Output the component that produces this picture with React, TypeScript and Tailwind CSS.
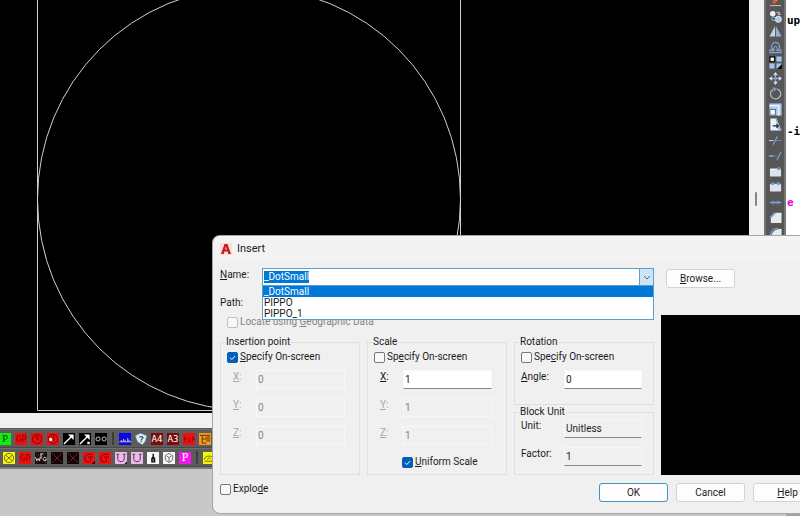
import type { ReactNode } from "react";

const UI = "font-[Roboto,'Liberation_Sans',sans-serif]";

/* ---------- toolbar icons ---------- */

type TileProps = { bg: string; children?: ReactNode };

function Tile({ bg, children }: TileProps) {
  return (
    <svg viewBox="0 0 13 13" className="block size-[12px]" aria-hidden="true">
      <rect width="13" height="13" fill={bg} />
      {children}
    </svg>
  );
}

type LetterProps = { bg: string; fg: string; text: string; serif?: boolean; size?: number };

function LetterTile({ bg, fg, text, serif, size = 9 }: LetterProps) {
  return (
    <Tile bg={bg}>
      <text
        x="6.5"
        y="10.2"
        textAnchor="middle"
        fontSize={size}
        fill={fg}
        fontFamily={serif ? "Liberation Serif, serif" : "DejaVu Sans Mono, monospace"}
      >
        {text}
      </text>
    </Tile>
  );
}

const RedClock = ({ dot }: { dot?: boolean }) => (
  <Tile bg="#f40d0d">
    <circle cx="6.5" cy="6.5" r="5" fill="none" stroke="#7c0505" />
    <path d="M3.5 2.5 7.5 8V2" fill="none" stroke="#7c0505" />
    {dot && <circle cx="4" cy="7" r="1.8" fill="#fff" />}
  </Tile>
);

const Arrow = ({ dot }: { dot?: boolean }) => (
  <Tile bg="#000">
    <path d="M1 12 9.5 3.5" stroke="#fff" strokeWidth="1.5" />
    <path d="M5.5 1.5H11.5V7.5Z" fill="#fff" />
    {dot && <rect x="9" y="9.5" width="2.6" height="2.6" fill="#fff" />}
  </Tile>
);

const Rings = () => (
  <Tile bg="#000">
    <circle cx="3.3" cy="6.5" r="2.2" fill="none" stroke="#ccc" />
    <circle cx="9.9" cy="6.5" r="2.2" fill="none" stroke="#ccc" />
  </Tile>
);

const Skyline = () => (
  <Tile bg="#0808f0">
    <path d="M0.5 9.5H13M2.5 9V7.5M5 9V6.5M6.5 9V7.5M9.5 9V5.5M11 9V7.5" stroke="#e5dc90" />
  </Tile>
);

const HelpShield = () => (
  <svg viewBox="0 0 13 13" className="block size-[12px]" aria-hidden="true">
    <path d="M0.5 3 6 0.5 12.5 3 11 9 8 12.5 3 9.5Z" fill="#e4f1f8" stroke="#8fb4ce" strokeWidth="0.6" />
    <text x="6.8" y="9.5" textAnchor="middle" fontSize="9" fontWeight="bold" fill="#21415f" fontFamily="Liberation Sans, sans-serif">
      ?
    </text>
  </svg>
);

const Circuit = () => (
  <Tile bg="#f79a1e">
    <path d="M1 2.5H12M3.5 2.5V11H8M3.500 6.5H12M7 4.500H12M8 8.500H12" fill="none" stroke="#5a3204" strokeWidth="1" />
  </Tile>
);

const YellowCross = () => (
  <Tile bg="#f5f50c">
    <circle cx="6.5" cy="6.5" r="5" fill="none" stroke="#6b6b14" />
    <path d="M3 3.500 10 9.500M10 3.500 3 9.500" stroke="#6b6b14" />
  </Tile>
);

const Wig = () => (
  <Tile bg="#111">
    <path d="M1 1 12 12M12 1 1 12" stroke="#b01818" strokeWidth="0.7" />
    <path d="M0.5 5.500 2 9.500 3.500 7 5 9.500 5.500 6M6.500 1V7M12.500 6.500C10 5 8.500 6.500 9 8.500 10 10.500 12.500 9.500 12.500 8H11M9 1 6.500 3.500" fill="none" stroke="#e8e8e8" strokeWidth="1" />
  </Tile>
);

const RedX = () => (
  <Tile bg="#080808">
    <path d="M1 1 12 12M12 1 1 12" stroke="#a81414" strokeWidth="1" />
  </Tile>
);

const RedC = ({ dot }: { dot?: boolean }) => (
  <Tile bg="#f21010">
    <path d="M10 2.500H4.500L2 5V8.500L4.500 11H6.500" fill="none" stroke="#5c0505" />
    <path d="M5.500 5.500H10.500M8 5.500V10.500" stroke="#5c0505" />
    {dot && <path d="M13 9.500V13H9.500Z" fill="#300" />}
  </Tile>
);

const Magnet = ({ dot }: { dot?: boolean }) => (
  <Tile bg="#efb8ea">
    <path d="M1.500 2.500H4.500M8.500 2.500H11.500M3 2.500V7.500C3 11.500 10 11.500 10 7.500V2.500" fill="none" stroke="#4c3450" />
    {dot && <path d="M13 10V13H10Z" fill="#222" />}
  </Tile>
);

const Bottle = () => (
  <Tile bg="#f8f8f8">
    <path d="M6 2H7.500V5L9 7V11.500H4.500V7L6 5Z" fill="#111" />
    <path d="M6.700 7.500V10" stroke="#ddd" strokeWidth="0.8" />
  </Tile>
);

const Cube = () => (
  <Tile bg="#f8f8f8">
    <path d="M6.500 1.500 10.500 4V8.500L6.500 11.500 2.500 8.500V4ZM4 4.500 6.500 6 9 4.500M6.500 6V11" fill="none" stroke="#555" strokeWidth="0.9" />
  </Tile>
);

const YellowArc = () => (
  <Tile bg="#f5f50c">
    <path d="M1.500 8.500C1.500 3 11.500 3 11.500 8.500M2 10H11M4.500 8 6.500 6 8.500 8" fill="none" stroke="#6b6b14" />
  </Tile>
);

/* ---------- modify palette icons ---------- */

const Glyph = ({ children }: { children: ReactNode }) => (
  <svg viewBox="0 0 14 14" className="block size-[13px]" aria-hidden="true">
    {children}
  </svg>
);

const modifyIcons: { name: string; icon: ReactNode }[] = [
  { name: "Erase", icon: <Glyph><path d="M5 9 12 1" stroke="#f5a43a" strokeWidth="3" /><path d="M3.500 9 6 6 8.500 8 6 11Z" fill="#e4502c" /><path d="M1 12.500H13" stroke="#ccc" /></Glyph> },
  { name: "Copy", icon: <Glyph><circle cx="4" cy="4" r="3" fill="#eef1f5" /><circle cx="10" cy="10" r="3.300" fill="#a9c9ee" stroke="#e8eef5" /><circle cx="5" cy="9.500" r="2" fill="none" stroke="#9cb9dd" /><path d="M8 2.500H11V5M9.500 4 11 5.500 12.500 4" fill="none" stroke="#ddd" /></Glyph> },
  { name: "Mirror", icon: <Glyph><path d="M6.500 1V12.500H0.500Z" fill="#c9d2dc" /><path d="M7.500 1V12.500H13.500Z" fill="#8ab2e2" /></Glyph> },
  { name: "Offset", icon: <Glyph><path d="M1 12.500H13V9.500H10.500C13 5 10 1.500 7 1.500S1 5 4 9.500H1Z" fill="none" stroke="#7da5d8" strokeWidth="1.200" /><path d="M3 10.500H5.500C3.500 4 10.500 4 8.500 10.500H11" fill="none" stroke="#a9b9cc" /></Glyph> },
  { name: "Array", icon: <Glyph><rect x="1" y="1" width="5" height="5" fill="#fff" stroke="#111" strokeWidth="1.400" /><rect x="8" y="0.500" width="5.500" height="5.500" fill="#9fc5f2" /><rect x="0.500" y="8" width="5.500" height="5.500" fill="#9fc5f2" /><rect x="8" y="8" width="5.500" height="5.500" fill="#9fc5f2" /><path d="M14 8.500V14H8.500Z" fill="#0a0a0a" /></Glyph> },
  { name: "Move", icon: <Glyph><path d="M7 0 9.500 3.500H4.500ZM7 14 4.500 10.500H9.500ZM0 7 3.500 4.500V9.500ZM14 7 10.500 9.500V4.500Z" fill="#dce3ec" /><path d="M7 3V11M3 7H11" stroke="#aebdce" /><rect x="5.500" y="5.500" width="3" height="3" fill="#6f9dd8" /></Glyph> },
  { name: "Rotate", icon: <Glyph><path d="M4.500 2.500A5.500 5.500 0 1 0 8.500 2" fill="none" stroke="#b2b6bb" strokeWidth="1.400" /><path d="M4 0 8.500 1.500 5.500 5Z" fill="#6f9dd8" /></Glyph> },
  { name: "Scale", icon: <Glyph><rect x="0.500" y="0.500" width="13" height="13" fill="#a9cbf3" /><path d="M0.500 3H10.500V13.500" fill="none" stroke="#edf3fa" strokeWidth="1.500" /><rect x="1" y="7" width="6" height="6" fill="#f5f5f5" stroke="#667" /></Glyph> },
  { name: "Stretch", icon: <Glyph><path d="M1.500 0.500H8L13 13.500H1.500Z" fill="#eef2f6" /><path d="M8 0.500 13.500 13.500H10L7 0.500Z" fill="#91baf0" /><path d="M4 8.500H10M8 6.500 10 8.500 8 10.500" fill="none" stroke="#222" strokeWidth="1.200" /></Glyph> },
  { name: "Trim", icon: <Glyph><path d="M0 7H5" stroke="#d5dae0" /><path d="M4.500 11.500 9 2.500" stroke="#79a5dc" strokeWidth="1.200" /><path d="M8 7H14" stroke="#79a5dc" strokeDasharray="2 1" /></Glyph> },
  { name: "Extend", icon: <Glyph><path d="M0 7.500H4.500" stroke="#d5dae0" /><path d="M5 7.500H9" stroke="#79a5dc" strokeDasharray="2 1" /><path d="M8.500 12 13 3" stroke="#79a5dc" strokeWidth="1.200" /></Glyph> },
  { name: "Break at point", icon: <Glyph><rect x="1" y="4" width="12" height="8.500" rx="1" fill="#dde3ea" /><path d="M1 4.500H9" stroke="#fff" /><rect x="9" y="2.500" width="3" height="3" fill="#6f9dd8" /></Glyph> },
  { name: "Break", icon: <Glyph><rect x="1" y="4" width="12" height="8.500" rx="1" fill="#dde3ea" /><rect x="2.500" y="2.500" width="3" height="3" fill="#6f9dd8" /><rect x="8.500" y="2.500" width="3" height="3" fill="#6f9dd8" /></Glyph> },
  { name: "Join", icon: <Glyph><path d="M1 7H13" stroke="#8db2df" strokeWidth="1.400" /><path d="M4 4.500 7 7 4 9.500ZM10 4.500 7 7 10 9.500Z" fill="#6f9dd8" /></Glyph> },
  { name: "Chamfer", icon: <Glyph><path d="M7.500 2H13.500V13H2V7.500Z" fill="#e6eaef" /><path d="M1 7 6.500 1.500" stroke="#6f9dd8" strokeWidth="1.500" /></Glyph> },
  { name: "Fillet", icon: <Glyph><path d="M13.500 2V13H2C2 6 6 2 13.500 2Z" fill="#e6eaef" /><path d="M1.500 9C2 4 5 1.500 10 1.500" fill="none" stroke="#6f9dd8" strokeWidth="1.500" /></Glyph> },
];

/* ---------- background application ---------- */

function ToolRow({ label, children }: { label: string; children: ReactNode }) {
  return (
    <div role="toolbar" aria-label={label} className="flex h-[19px] items-center gap-1 overflow-hidden border-y border-[#6e6e6e] border-b-[#484848] bg-[#5c5c5c]">
      {children}
    </div>
  );
}

const Grip = () => <span className="mx-px h-[13px] w-[2px] shrink-0 border-x border-[#3e3e3e] bg-[#6c6c6c]" />;

function Tool({ name, children }: { name: string; children: ReactNode }) {
  return (
    <button type="button" aria-label={name} className="shrink-0">
      {children}
    </button>
  );
}

function Workspace() {
  return (
    <div className="flex h-full">
      <div className="flex min-w-0 flex-1 flex-col">
        <div className="flex h-[413px] shrink-0">
          <div className="min-w-0 flex-1 overflow-hidden bg-black">
            <svg viewBox="0 0 500 413" className="block h-[413px] w-[500px]" aria-label="Drawing">
              <g fill="none" stroke="#d0d0d0" strokeWidth="1">
                <path d="M37.500 0V410.500H460.500V0" />
                <circle cx="249" cy="199" r="211.500" />
              </g>
            </svg>
          </div>
          <div className="flex w-[15px] flex-col items-end bg-[#f0f0f0] pr-[7px] pt-[192px]">
            <span className="h-[14px] w-[2px] rounded bg-[#868686]" />
          </div>
        </div>
        <div className="h-[15px] shrink-0 bg-[#f0f0f0]" />
        <div className="shrink-0 border-b-2 border-[#7c7c7c] bg-[#5c5c5c] pt-px">
          <ToolRow label="Custom tools">
            <span className="-ml-[5px] w-0 shrink-0" />
            <Tool name="P"><LetterTile bg="#10ee10" fg="#064806" text="P" serif size={12} /></Tool>
            <Tool name="GP"><LetterTile bg="#f40d0d" fg="#7a0808" text="GP" size={10} /></Tool>
            <Tool name="Arc"><RedClock /></Tool>
            <Tool name="Arc centre"><RedClock dot /></Tool>
            <Tool name="Leader"><Arrow /></Tool>
            <Tool name="Leader options"><Arrow dot /></Tool>
            <Tool name="Rings"><Rings /></Tool>
            <Grip />
            <Tool name="Profile"><Skyline /></Tool>
            <Tool name="Help"><HelpShield /></Tool>
            <Tool name="A4"><LetterTile bg="#7d0a0a" fg="#fff" text="A4" size={10} /></Tool>
            <Tool name="A3"><LetterTile bg="#7d0a0a" fg="#fff" text="A3" size={10} /></Tool>
            <Tool name="FIP"><LetterTile bg="#f40d0d" fg="#7a0808" text="FiP" size={7} /></Tool>
            <Tool name="Circuit"><Circuit /></Tool>
          </ToolRow>
          <ToolRow label="Block tools">
            <span className="-ml-px w-0 shrink-0" />
            <Tool name="Lamp"><YellowCross /></Tool>
            <Tool name="GP block"><LetterTile bg="#f40d0d" fg="#7a0808" text="GP" size={10} /></Tool>
            <Tool name="Wig"><Wig /></Tool>
            <Tool name="Cross"><RedX /></Tool>
            <Tool name="Cross 2"><RedX /></Tool>
            <Tool name="CT options"><RedC dot /></Tool>
            <Tool name="CT"><RedC /></Tool>
            <Tool name="Magnet options"><Magnet dot /></Tool>
            <Tool name="Magnet"><Magnet /></Tool>
            <Tool name="Bottle"><Bottle /></Tool>
            <Tool name="Cube"><Cube /></Tool>
            <Tool name="P block"><LetterTile bg="#f714f0" fg="#fff" text="P" serif size={13} /></Tool>
            <Grip />
            <Tool name="Arc block"><YellowArc /></Tool>
          </ToolRow>
        </div>
        <div className="flex-1 bg-[#c8c8c8]" />
      </div>
      <div role="toolbar" aria-label="Modify" className="mb-2 flex w-[22px] shrink-0 flex-col items-center border-x-2 border-[#757575] bg-[#565656]">
        <div className="-mt-[7px] grid h-[248px] grid-rows-16 items-center">
          {modifyIcons.map((m) => (
            <Tool key={m.name} name={m.name}>{m.icon}</Tool>
          ))}
        </div>
      </div>
      <div className="flex w-[14px] shrink-0 flex-col overflow-hidden border-b-8 border-[#a3a3a3] bg-white pl-px pt-[15px] font-['DejaVu_Sans_Mono',monospace] text-[11px] leading-[12px] font-bold whitespace-nowrap text-black">
        <span>up</span>
        <span className="pt-[99px]">-i</span>
        <span className="pt-[59px] text-[#f000e0]">e</span>
      </div>
    </div>
  );
}

/* ---------- dialog ---------- */

function Check({ id, children, checked, disabled }: { id: string; children: ReactNode; checked?: boolean; disabled?: boolean }) {
  return (
    <div className={disabled ? "flex h-3 items-center gap-[2px] text-[#858585]" : "flex h-3 items-center gap-[2px]"}>
      <span className="grid size-[11px] shrink-0">
        <input
          id={id}
          type="checkbox"
          defaultChecked={checked}
          disabled={disabled}
          className="peer col-start-1 row-start-1 size-[11px] appearance-none rounded-[2px] border border-[#777] bg-[#f8f8f8] checked:border-[#005fb8] checked:bg-[#005fb8] disabled:border-[#c0c0c0]"
        />
        <svg viewBox="0 0 11 11" className="pointer-events-none invisible col-start-1 row-start-1 size-[11px] peer-checked:visible" aria-hidden="true">
          <path d="M3 5.700 4.800 7.500 8.200 4" fill="none" stroke="#fff" strokeWidth="1" />
        </svg>
      </span>
      <label htmlFor={id} className="whitespace-nowrap">{children}</label>
    </div>
  );
}

type FieldProps = { id: string; label: ReactNode; value: string; kind: "edit" | "off" | "read"; labelClass: string };

function Field({ id, label, value, kind, labelClass }: FieldProps) {
  const look =
    kind === "edit"
      ? "border-[#f8f8f8] border-b-[#868686] bg-white"
      : kind === "read"
        ? "border-[#f8f8f8] border-b-[#868686] bg-[#f0f0f0]"
        : "border-[#f8f8f8] bg-[#f0f0f0] text-[#858585]";
  return (
    <div className="flex h-[19px] items-start">
      <label htmlFor={id} className={labelClass}>{label}</label>
      <input
        id={id}
        defaultValue={value}
        disabled={kind === "off"}
        readOnly={kind === "read"}
        className={`h-[19px] min-w-0 flex-1 border px-px pb-px outline-none ${look}`}
      />
    </div>
  );
}

function Group({ title, className, children }: { title: string; className?: string; children: ReactNode }) {
  return (
    <fieldset className={`min-w-0 border border-[#dfdfdf] px-[6px] ${className ?? ""}`}>
      <legend className="-ml-[2px] px-px leading-3">{title}</legend>
      {children}
    </fieldset>
  );
}

const BUTTON = "h-[19px] w-[69px] rounded-[3px] border bg-[#fdfdfd]";
const AXIS_OFF = "w-[29px] shrink-0 pl-[6px] pt-px text-[#a8a8a8]";
const AXIS_ON = "w-[29px] shrink-0 pl-[6px] pt-px";
const WIDE = "w-[43px] shrink-0 pt-px";

function InsertDialog() {
  return (
    <div
      role="dialog"
      aria-labelledby="dlg-title"
      className={`absolute left-[213px] top-[236px] w-[616px] overflow-hidden rounded-[7px] bg-[#f0f0f0] text-[10px] leading-3 text-[#1c1c1c] shadow-[0_0_0_1px_#a5a5a5] ${UI}`}
    >
      <div className="flex h-[26px] items-center gap-[5px] bg-[#f3f3f3] pl-[7px]">
        <svg viewBox="0 0 12 12" className="size-[12px]" aria-hidden="true">
          <rect width="12" height="12" fill="#f7dfdb" />
          <path d="M1 11 4.500 1H7.500L11 11H8.300L7.500 8.500H4.500L3.700 11ZM5.200 6.500H6.900L6 3.500Z" fill="#c41e25" fillRule="evenodd" />
        </svg>
        <h1 id="dlg-title" className="text-[11px]">Insert</h1>
      </div>

      <div className="px-[7px] pb-[11px] pt-[6px]">
        <div className="flex items-start">
          <label htmlFor="block-name" className="w-[42px] pt-px"><u>N</u>ame:</label>
          <div className="relative w-[392px]">
            <div className="flex h-[18px] border border-[#5c9fce] bg-white">
              <div className="flex flex-1 items-center pl-px">
                <input id="block-name" role="combobox" aria-expanded="true" aria-controls="block-list" defaultValue="_DotSmall" className="h-3 w-[45px] bg-[#0078d7] text-white outline-none" />
              </div>
              <button type="button" aria-label="Show blocks" className="grid w-[14px] place-items-center border-l border-[#5c9fce] bg-[#cce4f7]">
                <svg viewBox="0 0 8 5" className="h-[5px] w-[8px]" aria-hidden="true">
                  <path d="M1 1 4 4 7 1" fill="none" stroke="#50697c" />
                </svg>
              </button>
            </div>
            <ul id="block-list" role="listbox" className="absolute left-0 top-[17px] z-10 w-full border border-[#5c9fce] bg-white leading-[11px]">
              <li role="option" aria-selected="true" className="h-[11px] bg-[#0078d7] pl-px text-white">_DotSmall</li>
              <li role="option" aria-selected="false" className="h-[11px] pl-px">PIPPO</li>
              <li role="option" aria-selected="false" className="h-[11px] pl-px">PIPPO_1</li>
            </ul>
          </div>
          <button type="button" className={`${BUTTON} ml-3 mt-px border-[#d3d3d3]`}><u>B</u>rowse...</button>
        </div>

        <div className="grid grid-cols-[140px_140px_140px_1fr] gap-x-[7px]">
          <div className="col-span-3 pt-[9px]">
            <p>Path:</p>
            <div className="pl-[7px] pt-[7px]">
              <Check id="geo" disabled>Locate using <u>G</u>eographic Data</Check>
            </div>
          </div>
          <div className="col-start-4 row-span-2 row-start-1 mt-[27px] -mr-[7px] bg-black" aria-label="Preview" role="img" />

          <div className="col-span-3 row-start-2 grid grid-cols-3 gap-x-[7px] pt-2">
            <Group title="Insertion point" className="h-[139px]">
              <div className="pt-[3px]"><Check id="ins-on" checked><u>S</u>pecify On-screen</Check></div>
              <div className="flex flex-col gap-[9px] pr-2 pt-[7px]">
                <Field id="ins-x" label={<><u>X</u>:</>} value="0" kind="off" labelClass={AXIS_OFF} />
                <Field id="ins-y" label={<><u>Y</u>:</>} value="0" kind="off" labelClass={AXIS_OFF} />
                <Field id="ins-z" label={<><u>Z</u>:</>} value="0" kind="off" labelClass={AXIS_OFF} />
              </div>
            </Group>

            <Group title="Scale" className="h-[139px]">
              <div className="pt-[3px]"><Check id="sc-on">Sp<u>e</u>cify On-screen</Check></div>
              <div className="flex flex-col gap-[9px] pr-2 pt-[7px]">
                <Field id="sc-x" label={<><u>X</u>:</>} value="1" kind="edit" labelClass={AXIS_ON} />
                <Field id="sc-y" label={<><u>Y</u>:</>} value="1" kind="off" labelClass={AXIS_OFF} />
                <Field id="sc-z" label={<><u>Z</u>:</>} value="1" kind="off" labelClass={AXIS_OFF} />
              </div>
              <div className="pl-[28px] pt-[11px]"><Check id="uniform" checked><u>U</u>niform Scale</Check></div>
            </Group>

            <div className="flex h-[139px] flex-col justify-between">
              <Group title="Rotation" className="h-[69px]">
                <div className="pt-[3px]"><Check id="rot-on">Spe<u>c</u>ify On-screen</Check></div>
                <div className="pr-[5px] pt-[7px]">
                  <Field id="angle" label={<><u>A</u>ngle:</>} value="0" kind="edit" labelClass={WIDE} />
                </div>
              </Group>
              <Group title="Block Unit" className="h-[69px]">
                <div className="flex flex-col gap-[9px] pr-[5px] pt-px">
                  <Field id="unit" label="Unit:" value="Unitless" kind="read" labelClass={WIDE} />
                  <Field id="factor" label="Factor:" value="1" kind="read" labelClass={WIDE} />
                </div>
              </Group>
            </div>
          </div>
        </div>

        <div className="flex items-start justify-between pt-2">
          <Check id="explode">Explo<u>d</u>e</Check>
          <div className="flex gap-2">
            <button type="button" className={`${BUTTON} border-[#3f94c4]`}>OK</button>
            <button type="button" className={`${BUTTON} border-[#d3d3d3]`}>Cancel</button>
            <button type="button" className={`${BUTTON} border-[#d3d3d3]`}><u>H</u>elp</button>
          </div>
        </div>
      </div>
    </div>
  );
}

export default function App() {
  return (
    <main className="relative h-screen overflow-hidden bg-[#c8c8c8]">
      <Workspace />
      <InsertDialog />
    </main>
  );
}
